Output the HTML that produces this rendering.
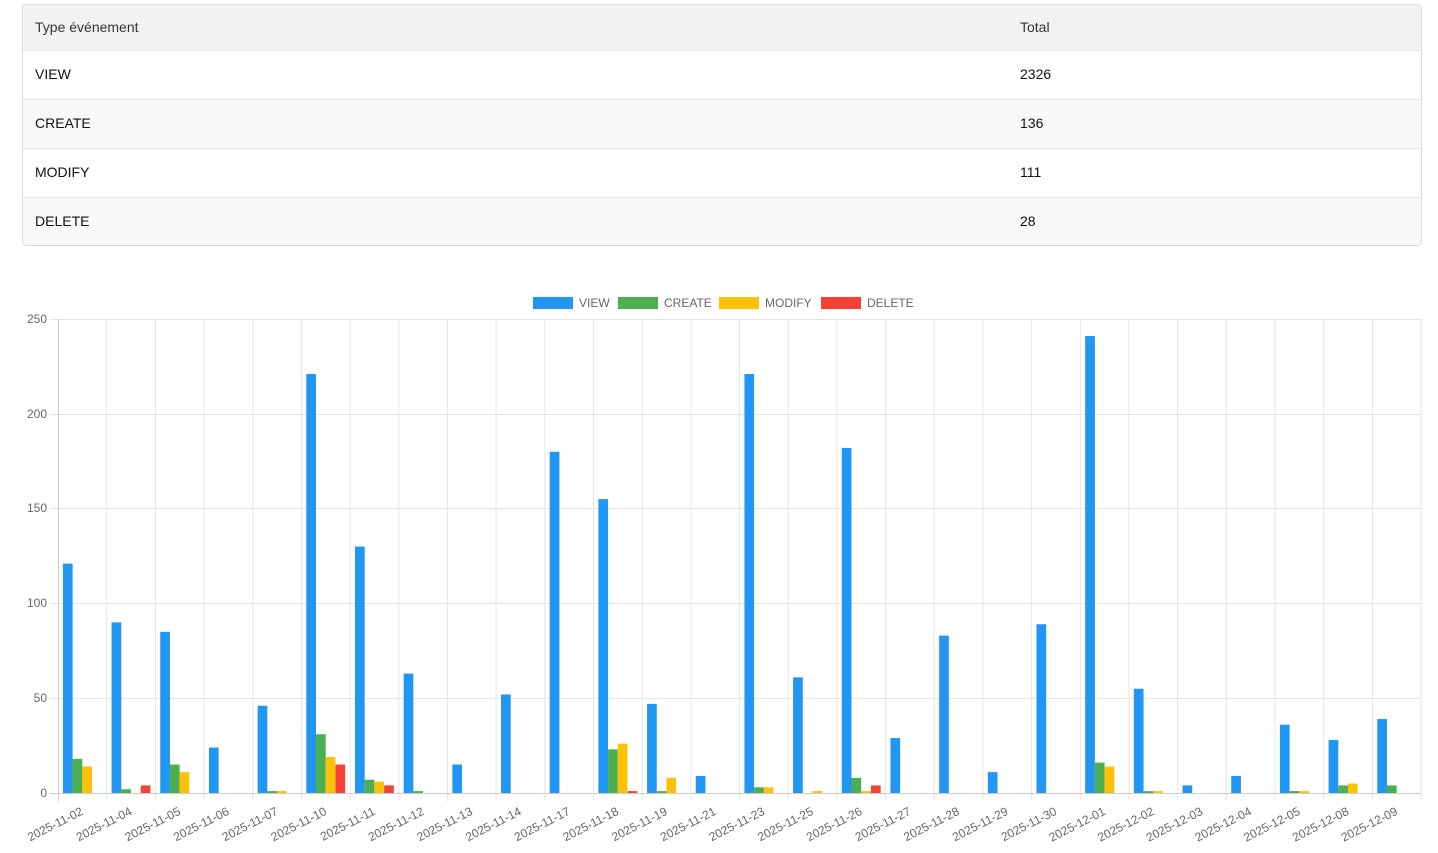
<!DOCTYPE html>
<html><head><meta charset="utf-8"><style>
body{margin:0;background:#fff;font-family:"Liberation Sans",Arial,sans-serif;}
.tbl{position:absolute;left:22px;top:4px;width:1398px;height:240px;border:1px solid #ddd;border-radius:4px;overflow:hidden;}
.r{height:49px;border-top:1px solid #e6e6e6;display:flex;align-items:center;font-size:14px;color:#111;box-sizing:border-box}
.r span:first-child{position:absolute;left:12px}
.r span:last-child{position:absolute;left:997px}
.h{height:45px;background:#f2f2f2;border-top:none;color:#333;padding-bottom:2px}
.alt{background:#f9f9f9}
</style></head><body>
<div class="tbl">
<div class="r h"><span>Type événement</span><span>Total</span></div>
<div class="r" style="padding-bottom:3px"><span>VIEW</span><span>2326</span></div>
<div class="r alt" style="padding-bottom:3px"><span>CREATE</span><span>136</span></div>
<div class="r" style="padding-bottom:3px"><span>MODIFY</span><span>111</span></div>
<div class="r alt" style="padding-bottom:3px"><span>DELETE</span><span>28</span></div>
</div>
<svg width="1438" height="853" style="position:absolute;left:0;top:0" font-family="Liberation Sans, Arial, sans-serif" font-size="12" fill="#666">
<g>
<rect x="533" y="297" width="40" height="12" fill="#2196F3"/><text x="579" y="307">VIEW</text>
<rect x="618" y="297" width="40" height="12" fill="#4CAF50"/><text x="664" y="307">CREATE</text>
<rect x="719" y="297" width="40" height="12" fill="#FFC107"/><text x="765" y="307">MODIFY</text>
<rect x="821" y="297" width="40" height="12" fill="#F44336"/><text x="867" y="307">DELETE</text>
</g>
<g stroke="#e5e5e5" stroke-width="1">
<line x1="50" y1="319.5" x2="1421" y2="319.5"/><line x1="50" y1="414.5" x2="1421" y2="414.5"/><line x1="50" y1="508.5" x2="1421" y2="508.5"/><line x1="50" y1="603.5" x2="1421" y2="603.5"/><line x1="50" y1="698.5" x2="1421" y2="698.5"/>
<line x1="106.7" y1="319" x2="106.7" y2="801"/><line x1="155.4" y1="319" x2="155.4" y2="801"/><line x1="204" y1="319" x2="204" y2="801"/><line x1="252.7" y1="319" x2="252.7" y2="801"/><line x1="301.4" y1="319" x2="301.4" y2="801"/><line x1="350.1" y1="319" x2="350.1" y2="801"/><line x1="398.8" y1="319" x2="398.8" y2="801"/><line x1="447.4" y1="319" x2="447.4" y2="801"/><line x1="496.1" y1="319" x2="496.1" y2="801"/><line x1="544.8" y1="319" x2="544.8" y2="801"/><line x1="593.5" y1="319" x2="593.5" y2="801"/><line x1="642.2" y1="319" x2="642.2" y2="801"/><line x1="690.8" y1="319" x2="690.8" y2="801"/><line x1="739.5" y1="319" x2="739.5" y2="801"/><line x1="788.2" y1="319" x2="788.2" y2="801"/><line x1="836.9" y1="319" x2="836.9" y2="801"/><line x1="885.6" y1="319" x2="885.6" y2="801"/><line x1="934.2" y1="319" x2="934.2" y2="801"/><line x1="982.9" y1="319" x2="982.9" y2="801"/><line x1="1031.6" y1="319" x2="1031.6" y2="801"/><line x1="1080.3" y1="319" x2="1080.3" y2="801"/><line x1="1129" y1="319" x2="1129" y2="801"/><line x1="1177.6" y1="319" x2="1177.6" y2="801"/><line x1="1226.3" y1="319" x2="1226.3" y2="801"/><line x1="1275" y1="319" x2="1275" y2="801"/><line x1="1323.7" y1="319" x2="1323.7" y2="801"/><line x1="1372.4" y1="319" x2="1372.4" y2="801"/><line x1="1421" y1="319" x2="1421" y2="801"/>
</g>
<g stroke="#ccc"><line x1="58.5" y1="319" x2="58.5" y2="801"/><line x1="50" y1="793.5" x2="1421" y2="793.5"/></g>
<g text-anchor="end">
<text x="47" y="323">250</text><text x="47" y="418">200</text><text x="47" y="512">150</text><text x="47" y="607">100</text><text x="47" y="702">50</text><text x="47" y="797">0</text>
</g>
<g fill="#2196F3">
<g transform="translate(58,793) scale(1,-1.896)"><rect x="4.9" y="0" width="9.7" height="121"/><rect x="14.6" width="9.7" height="18" fill="#4CAF50"/><rect x="24.3" width="9.7" height="14" fill="#FFC107"/></g>
<g transform="translate(106.68,793) scale(1,-1.896)"><rect x="4.9" width="9.7" height="90"/><rect x="14.6" width="9.7" height="2" fill="#4CAF50"/><rect x="34.1" width="9.7" height="4" fill="#F44336"/></g>
<g transform="translate(155.36,793) scale(1,-1.896)"><rect x="4.9" width="9.7" height="85"/><rect x="14.6" width="9.7" height="15" fill="#4CAF50"/><rect x="24.3" width="9.7" height="11" fill="#FFC107"/></g>
<g transform="translate(204.04,793) scale(1,-1.896)"><rect x="4.9" width="9.7" height="24"/></g>
<g transform="translate(252.72,793) scale(1,-1.896)"><rect x="4.9" width="9.7" height="46"/><rect x="14.6" width="9.7" height="1" fill="#4CAF50"/><rect x="24.3" width="9.7" height="1" fill="#FFC107"/></g>
<g transform="translate(301.4,793) scale(1,-1.896)"><rect x="4.9" width="9.7" height="221"/><rect x="14.6" width="9.7" height="31" fill="#4CAF50"/><rect x="24.3" width="9.7" height="19" fill="#FFC107"/><rect x="34.1" width="9.7" height="15" fill="#F44336"/></g>
<g transform="translate(350.08,793) scale(1,-1.896)"><rect x="4.9" width="9.7" height="130"/><rect x="14.6" width="9.7" height="7" fill="#4CAF50"/><rect x="24.3" width="9.7" height="6" fill="#FFC107"/><rect x="34.1" width="9.7" height="4" fill="#F44336"/></g>
<g transform="translate(398.76,793) scale(1,-1.896)"><rect x="4.9" width="9.7" height="63"/><rect x="14.6" width="9.7" height="1" fill="#4CAF50"/></g>
<g transform="translate(447.44,793) scale(1,-1.896)"><rect x="4.9" width="9.7" height="15"/></g>
<g transform="translate(496.12,793) scale(1,-1.896)"><rect x="4.9" width="9.7" height="52"/></g>
<g transform="translate(544.8,793) scale(1,-1.896)"><rect x="4.9" width="9.7" height="180"/></g>
<g transform="translate(593.48,793) scale(1,-1.896)"><rect x="4.9" width="9.7" height="155"/><rect x="14.6" width="9.7" height="23" fill="#4CAF50"/><rect x="24.3" width="9.7" height="26" fill="#FFC107"/><rect x="34.1" width="9.7" height="1" fill="#F44336"/></g>
<g transform="translate(642.16,793) scale(1,-1.896)"><rect x="4.9" width="9.7" height="47"/><rect x="14.6" width="9.7" height="1" fill="#4CAF50"/><rect x="24.3" width="9.7" height="8" fill="#FFC107"/></g>
<g transform="translate(690.84,793) scale(1,-1.896)"><rect x="4.9" width="9.7" height="9"/></g>
<g transform="translate(739.52,793) scale(1,-1.896)"><rect x="4.9" width="9.7" height="221"/><rect x="14.6" width="9.7" height="3" fill="#4CAF50"/><rect x="24.3" width="9.7" height="3" fill="#FFC107"/></g>
<g transform="translate(788.2,793) scale(1,-1.896)"><rect x="4.9" width="9.7" height="61"/><rect x="24.3" width="9.7" height="1" fill="#FFC107"/></g>
<g transform="translate(836.88,793) scale(1,-1.896)"><rect x="4.9" width="9.7" height="182"/><rect x="14.6" width="9.7" height="8" fill="#4CAF50"/><rect x="24.3" width="9.7" height="1" fill="#FFC107"/><rect x="34.1" width="9.7" height="4" fill="#F44336"/></g>
<g transform="translate(885.56,793) scale(1,-1.896)"><rect x="4.9" width="9.7" height="29"/></g>
<g transform="translate(934.24,793) scale(1,-1.896)"><rect x="4.9" width="9.7" height="83"/></g>
<g transform="translate(982.92,793) scale(1,-1.896)"><rect x="4.9" width="9.7" height="11"/></g>
<g transform="translate(1031.6,793) scale(1,-1.896)"><rect x="4.9" width="9.7" height="89"/></g>
<g transform="translate(1080.28,793) scale(1,-1.896)"><rect x="4.9" width="9.7" height="241"/><rect x="14.6" width="9.7" height="16" fill="#4CAF50"/><rect x="24.3" width="9.7" height="14" fill="#FFC107"/></g>
<g transform="translate(1128.96,793) scale(1,-1.896)"><rect x="4.9" width="9.7" height="55"/><rect x="14.6" width="9.7" height="1" fill="#4CAF50"/><rect x="24.3" width="9.7" height="1" fill="#FFC107"/></g>
<g transform="translate(1177.64,793) scale(1,-1.896)"><rect x="4.9" width="9.7" height="4"/></g>
<g transform="translate(1226.32,793) scale(1,-1.896)"><rect x="4.9" width="9.7" height="9"/></g>
<g transform="translate(1275,793) scale(1,-1.896)"><rect x="4.9" width="9.7" height="36"/><rect x="14.6" width="9.7" height="1" fill="#4CAF50"/><rect x="24.3" width="9.7" height="1" fill="#FFC107"/></g>
<g transform="translate(1323.68,793) scale(1,-1.896)"><rect x="4.9" width="9.7" height="28"/><rect x="14.6" width="9.7" height="4" fill="#4CAF50"/><rect x="24.3" width="9.7" height="5" fill="#FFC107"/></g>
<g transform="translate(1372.36,793) scale(1,-1.896)"><rect x="4.9" width="9.7" height="39"/><rect x="14.6" width="9.7" height="4" fill="#4CAF50"/></g>
</g>
<g text-anchor="end">
<text transform="translate(84,814) rotate(-27)">2025-11-02</text>
<text transform="translate(132.7,814) rotate(-27)">2025-11-04</text>
<text transform="translate(181.4,814) rotate(-27)">2025-11-05</text>
<text transform="translate(230,814) rotate(-27)">2025-11-06</text>
<text transform="translate(278.7,814) rotate(-27)">2025-11-07</text>
<text transform="translate(327.4,814) rotate(-27)">2025-11-10</text>
<text transform="translate(376.1,814) rotate(-27)">2025-11-11</text>
<text transform="translate(424.8,814) rotate(-27)">2025-11-12</text>
<text transform="translate(473.4,814) rotate(-27)">2025-11-13</text>
<text transform="translate(522.1,814) rotate(-27)">2025-11-14</text>
<text transform="translate(570.8,814) rotate(-27)">2025-11-17</text>
<text transform="translate(619.5,814) rotate(-27)">2025-11-18</text>
<text transform="translate(668.2,814) rotate(-27)">2025-11-19</text>
<text transform="translate(716.8,814) rotate(-27)">2025-11-21</text>
<text transform="translate(765.5,814) rotate(-27)">2025-11-23</text>
<text transform="translate(814.2,814) rotate(-27)">2025-11-25</text>
<text transform="translate(862.9,814) rotate(-27)">2025-11-26</text>
<text transform="translate(911.6,814) rotate(-27)">2025-11-27</text>
<text transform="translate(960.2,814) rotate(-27)">2025-11-28</text>
<text transform="translate(1008.9,814) rotate(-27)">2025-11-29</text>
<text transform="translate(1057.6,814) rotate(-27)">2025-11-30</text>
<text transform="translate(1106.3,814) rotate(-27)">2025-12-01</text>
<text transform="translate(1155,814) rotate(-27)">2025-12-02</text>
<text transform="translate(1203.6,814) rotate(-27)">2025-12-03</text>
<text transform="translate(1252.3,814) rotate(-27)">2025-12-04</text>
<text transform="translate(1301,814) rotate(-27)">2025-12-05</text>
<text transform="translate(1349.7,814) rotate(-27)">2025-12-08</text>
<text transform="translate(1398.4,814) rotate(-27)">2025-12-09</text>
</g>
</svg>
</body></html>
